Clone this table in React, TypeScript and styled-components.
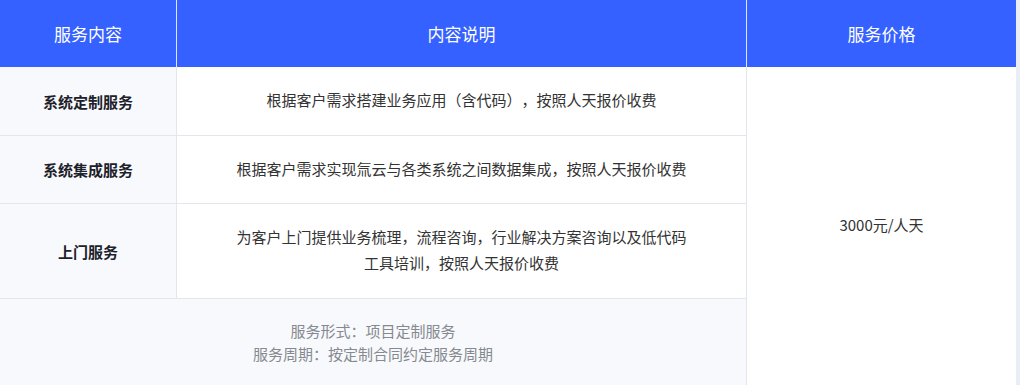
import React from 'react'
import styled, { createGlobalStyle } from 'styled-components'

const GlobalStyle = createGlobalStyle`
  html, body {
    margin: 0;
    padding: 0;
    background: #e9edf4;
  }
  * {
    box-sizing: border-box;
  }
`

const services = [
  {
    name: '系统定制服务',
    desc: ['根据客户需求搭建业务应用（含代码），按照人天报价收费'],
  },
  {
    name: '系统集成服务',
    desc: ['根据客户需求实现氚云与各类系统之间数据集成，按照人天报价收费'],
  },
  {
    name: '上门服务',
    desc: ['为客户上门提供业务梳理，流程咨询，行业解决方案咨询以及低代码', '工具培训，按照人天报价收费'],
  },
]

const rowHeights = ['69px', '68px', '95px']

const Page = styled.div`
  width: 1020px;
  height: 385px;
  padding-right: 4px;
  overflow: hidden;
  font-family: 'Noto Sans CJK SC', 'Noto Sans', sans-serif;
  text-spacing-trim: space-all;
`

const Table = styled.div`
  display: grid;
  grid-template-columns: 177px 570px 269px;
  grid-template-rows: 67px ${rowHeights.join(' ')} 86px;
  background: #ffffff;
`

const HeadCell = styled.div<{ last?: boolean }>`
  display: flex;
  align-items: center;
  justify-content: center;
  background: #3461ff;
  color: #ffffff;
  font-size: 17px;
  border-right: ${({ last }) => (last ? 'none' : '1px solid #dfe6ff')};
`

const NameCell = styled.div`
  display: flex;
  align-items: center;
  justify-content: center;
  background: #f7f9fc;
  color: #1d2129;
  font-size: 15px;
  font-weight: 700;
  border-right: 1px solid #e3e6eb;
  border-bottom: 1px solid #e3e6eb;
`

const DescCell = styled.div`
  display: flex;
  flex-direction: column;
  align-items: center;
  justify-content: center;
  color: #333333;
  font-size: 15px;
  line-height: 26px;
  border-right: 1px solid #e3e6eb;
  border-bottom: 1px solid #e3e6eb;
  padding-bottom: 2px;
`

const PriceCell = styled.div`
  grid-column: 3;
  grid-row: 2 / 6;
  display: flex;
  align-items: center;
  justify-content: center;
  color: #333333;
  font-size: 15px;
  padding-bottom: 4px;
`

const Footer = styled.div`
  grid-column: 1 / 3;
  display: flex;
  flex-direction: column;
  align-items: center;
  justify-content: center;
  background: #f7f9fc;
  color: #86898f;
  font-size: 15px;
  line-height: 23px;
  border-right: 1px solid #e3e6eb;
`

const App = () => {
  return (
    <Page>
      <GlobalStyle />
      <Table>
        <HeadCell>服务内容</HeadCell>
        <HeadCell>内容说明</HeadCell>
        <HeadCell last>服务价格</HeadCell>
        {services.map((item, index) => (
          <React.Fragment key={item.name}>
            <NameCell style={{ gridRow: index + 2, gridColumn: 1 }}>{item.name}</NameCell>
            <DescCell style={{ gridRow: index + 2, gridColumn: 2 }}>
              {item.desc.map((line) => (
                <span key={line}>{line}</span>
              ))}
            </DescCell>
          </React.Fragment>
        ))}
        <PriceCell>3000元/人天</PriceCell>
        <Footer>
          <span>服务形式：项目定制服务</span>
          <span>服务周期：按定制合同约定服务周期</span>
        </Footer>
      </Table>
    </Page>
  )
}

export default App
